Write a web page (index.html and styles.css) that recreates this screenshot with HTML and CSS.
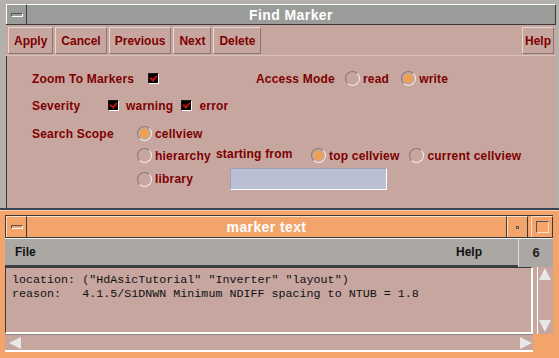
FILE: index.html
```html
<!DOCTYPE html>
<html lang="en">
<head>
  <meta charset="UTF-8">
  <title>Find Marker</title>
  <link rel="stylesheet" href="styles.css">
</head>
<body>
  <div class="win win-find">
    <div class="titlebar">
      <div class="wbox"><span class="dash"></span></div>
      <div class="title">Find Marker</div>
    </div>
    <div class="toolbar">
      <button class="btn btn-apply">Apply</button>
      <button class="btn btn-cancel">Cancel</button>
      <button class="btn btn-prev">Previous</button>
      <button class="btn btn-next">Next</button>
      <button class="btn btn-del">Delete</button>
      <div class="grow"></div>
      <button class="btn btn-help">Help</button>
    </div>
    <div class="form">
      <div class="row row-zoom">
        <span class="lbl lbl-zoom">Zoom To Markers</span>
        <span class="chk"></span>
        <span class="lbl lbl-access">Access Mode</span>
        <span class="radio"></span><span class="opt opt-read">read</span>
        <span class="radio on"></span><span class="opt">write</span>
      </div>
      <div class="row row-sev">
        <span class="lbl lbl-sev">Severity</span>
        <span class="chk"></span><span class="opt opt-warn">warning</span>
        <span class="chk"></span><span class="opt">error</span>
      </div>
      <div class="row row-scope">
        <span class="lbl lbl-scope">Search Scope</span>
        <span class="radio on"></span><span class="opt">cellview</span>
      </div>
      <div class="row row-hier">
        <span class="radio"></span><span class="opt opt-hier">hierarchy</span>
        <span class="lbl lbl-from">starting from</span>
        <span class="radio on"></span><span class="opt opt-top">top cellview</span>
        <span class="radio"></span><span class="opt">current cellview</span>
      </div>
      <div class="row row-lib">
        <span class="radio"></span><span class="opt opt-lib">library</span>
        <span class="field"></span>
      </div>
    </div>
  </div>

  <div class="win win-text">
    <div class="titlebar">
      <div class="wbox"><span class="dash"></span></div>
      <div class="title">marker text</div>
      <div class="wbox wbox-min"><span class="dot"></span></div>
      <div class="wbox wbox-max"><span class="sq"></span></div>
    </div>
    <div class="menubar">
      <div class="menus">
        <span class="menu">File</span>
        <span class="menu">Help</span>
      </div>
      <div class="count">6</div>
    </div>
    <div class="textrow">
      <pre class="text">location: ("HdAsicTutorial" "Inverter" "layout")
reason:   4.1.5/S1DNWN Minimum NDIFF spacing to NTUB = 1.8</pre>
      <div class="vscroll">
        <span class="arrow arrow-up"></span>
        <span class="arrow arrow-down"></span>
      </div>
    </div>
    <div class="hscroll">
      <span class="arrow arrow-left"></span>
      <span class="arrow arrow-right"></span>
    </div>
  </div>
</body>
</html>
```
FILE: styles.css
```css
:root {
  --frame-gray: #b4b0ac;
  --title-gray: #9a9c9a;
  --body: #c6a69f;
  --orange: #f2a46a;
  --menu-gray: #aba7a3;
  --red: #7e0000;
  --field: #b9c0d3;
}
* { box-sizing: border-box; margin: 0; padding: 0; }
body {
  width: 559px;
  height: 358px;
  overflow: hidden;
  font-family: 'Liberation Sans', Arial, sans-serif;
  font-weight: bold;
  font-size: 12px;
  background: var(--orange);
}

.win { display: flex; flex-direction: column; }
.win-find {
  height: 210px;
  background: var(--frame-gray);
  padding: 4px 3px 0 6px;
  border-bottom: 2px solid #3c4450;
}
.titlebar { display: flex; height: 21px; border-bottom: 1px solid #3a3a3a; }
.wbox {
  width: 21px;
  display: flex; align-items: center; justify-content: center;
  border-left: 1px solid #fff; border-top: 1px solid #fff;
  border-right: 1px solid #3a3a3a;
}
.dash { width: 12px; height: 4px; border: 1px solid #555; border-right-color: #fff; border-bottom-color: #fff; }
.title {
  flex: 1;
  text-align: center;
  color: #fff;
  font-size: 14px;
  line-height: 20px;
  letter-spacing: 0.4px;
  background: var(--title-gray);
  border-top: 1px solid #fff;
  border-right: 1px solid #3a3a3a;
}
.win-find .wbox { background: var(--title-gray); }

.toolbar {
  display: flex;
  gap: 2px;
  height: 31px;
  padding: 2px;
  background: var(--body);
  border-bottom: 1px solid #d8c4bc;
}
.grow { flex: 1; }
.btn {
  font: inherit;
  color: var(--red);
  background: var(--body);
  border: 1px solid #e6d8d2;
  border-right-color: #8c7470;
  border-bottom-color: #8c7470;
  padding: 0 5px;
  height: 27px;
}
.btn-help { width: 32px; padding: 0; }

.form {
  flex: 1;
  background: var(--body);
  color: var(--red);
  padding: 14px 0 0 25px;
  border-left: 1px solid #3a3a3a;
}
.row { display: flex; align-items: center; letter-spacing: 0.2px; }
.row-zoom { height: 17px; }
.row-sev { height: 17px; margin-top: 10px; }
.row-scope { height: 17px; margin-top: 11px; }
.row-hier { height: 17px; margin-top: 5px; padding-left: 105px; }
.row-lib { height: 22px; margin-top: 4px; padding-left: 105px; }

.lbl-zoom { width: 116px; }
.lbl-access { margin-left: 93px; width: 89px; }
.lbl-sev { width: 76px; }
.lbl-scope { width: 105px; }
.lbl-from { margin: -3px 0 0 8px; width: 95px; }
.opt { margin-left: 3px; }
.opt-read { margin-right: 12px; }
.opt-warn { margin-right: 8px; }
.opt-hier { width: 53px; }
.opt-top { margin-right: 10px; }
.opt-lib { width: 75px; }

.chk {
  width: 11px; height: 11px;
  background: #000;
  border: 1px solid #1a1a1a;
  border-right-color: #fff; border-bottom-color: #fff;
  position: relative;
  margin-right: 4px;
}
.chk::after {
  content: '';
  position: absolute;
  left: 2px; top: 0px;
  width: 3px; height: 5px;
  border-right: 2px solid #c01010;
  border-bottom: 2px solid #c01010;
  transform: rotate(40deg);
}
.radio {
  width: 15px; height: 15px;
  border-radius: 50%;
  border: 1px solid #8a7a76;
  border-right-color: #f4ece8;
  border-bottom-color: #f4ece8;
  display: flex; align-items: center; justify-content: center;
}
.radio.on::after {
  content: '';
  width: 9px; height: 9px;
  border-radius: 50%;
  background: #f0a050;
}
.field {
  width: 157px; height: 22px;
  background: var(--field);
  border: 1px solid #9aa2b4;
  border-right-color: #fff; border-bottom-color: #fff;
}

.win-text {
  flex: 1;
  height: 148px;
  padding: 4px 6px 0 5px;
  background: var(--orange);
  border-top: 1px solid #f8d0b0;
}
.win-text .titlebar { height: 23px; border-top: 1px solid #3a3a3a; border-left: 1px solid #3a3a3a; }
.win-text .wbox { background: var(--orange); border-color: #fbe0c8 #3a3a3a #3a3a3a #fbe0c8; }
.win-text .title { background: var(--orange); line-height: 21px; border-top-color: #fbe0c8; }
.wbox-min { margin-right: 3px; }
.wbox-max { width: 22px; }
.dot { width: 3px; height: 3px; border: 1px solid #555; }
.sq { width: 13px; height: 12px; border: 1px solid #555; border-right-color: #fbe0c8; border-bottom-color: #fbe0c8; }

.menubar {
  display: flex;
  height: 29px;
  background: var(--menu-gray);
}
.menus {
  flex: 1;
  display: flex;
  justify-content: space-between;
  align-items: center;
  padding: 0 36px 0 10px;
  color: #111;
  border-top: 1px solid #eee;
  border-bottom: 2px solid #384048;
}
.count {
  width: 35px;
  text-align: center;
  line-height: 27px;
  color: #222;
  font-size: 13px;
  border-left: 1px solid #ddd;
  border-top: 1px solid #eee;
}

.textrow { display: flex; height: 67px; background: var(--body); }
.text {
  flex: 1;
  margin-right: 4px;
  font-family: 'Liberation Mono', 'Courier New', monospace;
  font-weight: normal;
  font-size: 11.7px;
  line-height: 14px;
  color: #111;
  padding: 5px 0 0 6px;
  border: 1px solid #3a3a3a;
  border-right: 2px solid #fff;
  border-bottom: 2px solid #fff;
}
.vscroll {
  width: 16px;
  display: flex; flex-direction: column; justify-content: space-between;
  border-left: 1px solid #fff;
  padding: 0 1px 2px 1px;
}
.hscroll {
  height: 18px;
  margin-right: 20px;
  display: flex; justify-content: space-between; align-items: center;
  background: var(--body);
  border-top: 1px solid #888;
  border-bottom: 2px solid #fff;
  padding: 0 1px 0 4px;
}
.arrow { width: 0; height: 0; border-style: solid; }
.arrow-up { border-width: 0 6px 12px 6px; border-color: transparent transparent #e8e8e8 transparent; margin-top: 1px; }
.arrow-down { border-width: 12px 6px 0 6px; border-color: #e8e8e8 transparent transparent transparent; }
.arrow-left { border-width: 6px 12px 6px 0; border-color: transparent #e8e8e8 transparent transparent; }
.arrow-right { border-width: 6px 0 6px 12px; border-color: transparent transparent transparent #e8e8e8; }
```
